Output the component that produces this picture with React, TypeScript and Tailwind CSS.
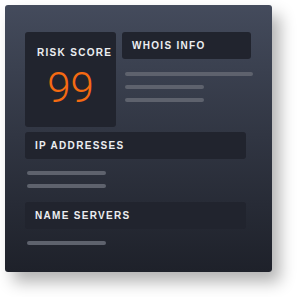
import React from 'react';

const Bar = ({ w }: { w: string }) => (
  <div className={`h-[4px] rounded-full bg-[#5e626d] ${w}`} />
);

const SectionHeader = ({ title, w }: { title: string; w: string }) => (
  <div className={`h-[27px] ${w} rounded-[3px] bg-[#21242e] flex items-center pl-[10px]`}>
    <span className="text-[10px] leading-[12px] font-bold tracking-[1.3px] text-[#eceef1]">{title}</span>
  </div>
);

export default function App() {
  return (
    <div className="w-[297px] h-[297px] bg-white p-[5px] font-['Liberation_Sans',Arial,sans-serif]">
      <div className="w-[267px] h-[267px] rounded-[3px] bg-gradient-to-b from-[#444b5c] to-[#1e212a] shadow-[8px_10px_16px_rgba(0,0,0,0.3)] pl-[20px] pt-[27px]">
        <div className="flex gap-[6px]">
          <div className="w-[91px] h-[95px] rounded-[3px] bg-[#21242e] flex flex-col pt-[15px] pl-[12px]">
            <span className="text-[10px] leading-[12px] font-bold tracking-[1.3px] text-[#eceef1]">RISK SCORE</span>
            <span className="mt-[8px] -ml-[12px] w-[91px] text-center text-[42px] leading-[42px] font-light text-[#f56a12] font-['Roboto',sans-serif]">
              99
            </span>
          </div>
          <div className="flex flex-col">
            <SectionHeader title="WHOIS INFO" w="w-[129px]" />
            <div className="flex flex-col gap-[9px] pl-[3px] mt-[13px]">
              <Bar w="w-[128px]" />
              <Bar w="w-[79px]" />
              <Bar w="w-[79px]" />
            </div>
          </div>
        </div>

        <div className="mt-[5px]">
          <SectionHeader title="IP ADDRESSES" w="w-[221px]" />
        </div>
        <div className="flex flex-col gap-[9px] pl-[2px] mt-[12px]">
          <Bar w="w-[79px]" />
          <Bar w="w-[79px]" />
        </div>

        <div className="mt-[14px]">
          <SectionHeader title="NAME SERVERS" w="w-[221px]" />
        </div>
        <div className="flex flex-col pl-[2px] mt-[12px]">
          <Bar w="w-[79px]" />
        </div>
      </div>
    </div>
  );
}
